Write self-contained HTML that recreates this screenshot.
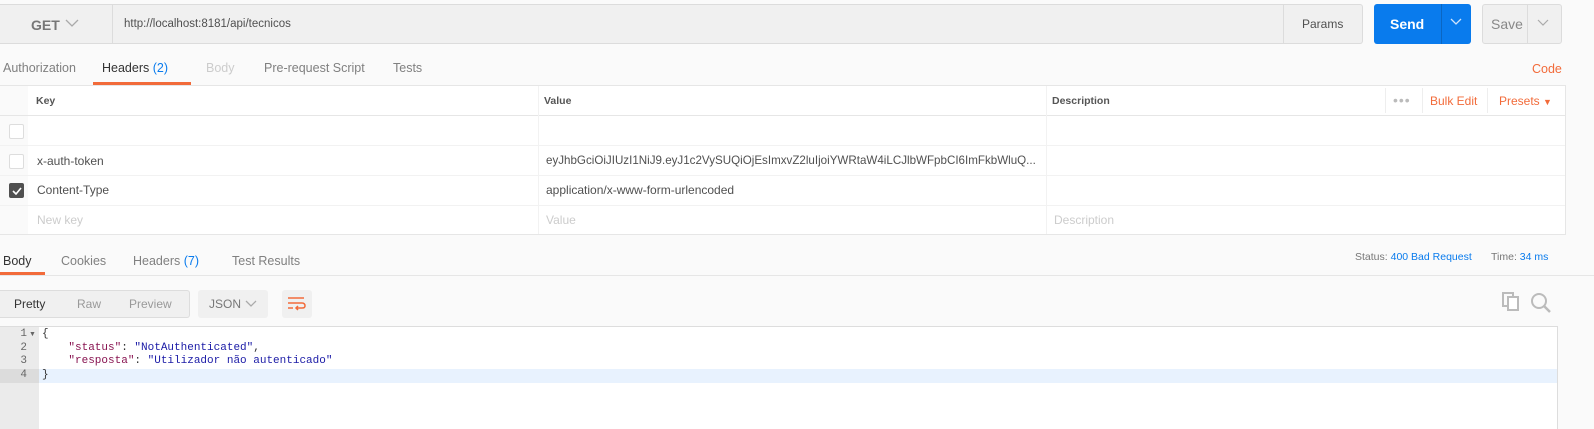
<!DOCTYPE html>
<html><head><meta charset="utf-8"><style>
*{box-sizing:border-box;margin:0;padding:0}
body{width:1594px;height:429px;overflow:hidden;background:#fafafa;font-family:"Liberation Sans",sans-serif;font-size:12px;color:#505050;position:relative}
.a{position:absolute}
.tab{position:absolute;top:61px;font-size:12.5px;color:#808080}
.cell{position:absolute;font-size:12px;color:#505050;white-space:nowrap}
.hl{position:absolute;left:0;height:1px;background:#e6e6e6}
.cb{position:absolute;left:9px;width:15px;height:15px;border:1px solid #ddd;border-radius:2px;background:#fff}
.mono{font-family:"Liberation Mono",monospace;font-size:11px}
</style></head><body>
<div class="a" style="left:0;top:4px;width:1363px;height:40px;background:#f0f0f0;border:1px solid #dcdcdc;border-left:none;border-radius:0 3px 3px 0"></div>
<div class="a" style="left:112px;top:5px;width:1px;height:38px;background:#dcdcdc"></div>
<div class="a" style="left:1283px;top:5px;width:1px;height:38px;background:#dcdcdc"></div>
<div class="a" style="left:31px;top:17px;font-size:14px;color:#777;font-weight:bold">GET</div>
<svg class="a" style="left:65px;top:18px" width="14" height="10"><path d="M1 2 L7 8 L13 2" stroke="#aaa" stroke-width="1.3" fill="none"/></svg>
<div class="a" style="left:124px;top:18px;font-size:11.5px;color:#505050">http://localhost:8181/api/tecnicos</div>
<div class="a" style="left:1302px;top:17px;font-size:12px;color:#505050">Params</div>
<div class="a" style="left:1374px;top:4px;width:97px;height:40px;background:#097bed;border-radius:3px"></div>
<div class="a" style="left:1441px;top:4px;width:1px;height:40px;background:#0a66c2"></div>
<div class="a" style="left:1390px;top:16px;font-size:14px;color:#fff;font-weight:bold">Send</div>
<svg class="a" style="left:1450px;top:18px" width="12" height="8"><path d="M1 1 L6 6 L11 1" stroke="#cfe3fb" stroke-width="1.3" fill="none"/></svg>
<div class="a" style="left:1482px;top:4px;width:80px;height:40px;background:#f0f0f0;border:1px solid #dcdcdc;border-radius:3px"></div>
<div class="a" style="left:1527px;top:5px;width:1px;height:38px;background:#dcdcdc"></div>
<div class="a" style="left:1491px;top:16px;font-size:14px;color:#888">Save</div>
<svg class="a" style="left:1537px;top:19px" width="12" height="8"><path d="M1 1 L6 6 L11 1" stroke="#aaa" stroke-width="1.2" fill="none"/></svg>
<div class="tab" style="left:3px">Authorization</div>
<div class="tab" style="left:102px;color:#333">Headers <span style="color:#097bed">(2)</span></div>
<div class="tab" style="left:206px;color:#ccc">Body</div>
<div class="tab" style="left:264px">Pre-request Script</div>
<div class="tab" style="left:393px">Tests</div>
<div class="a" style="left:93px;top:82px;width:98px;height:3px;background:#f26b3a"></div>
<div class="a" style="left:1532px;top:62px;font-size:12.5px;color:#f26b3a">Code</div>
<div class="a" style="left:0;top:85px;width:1566px;height:150px;background:#fff"></div>
<div class="a" style="left:0;top:85px;width:28px;height:150px;background:#fafafa"></div>
<div class="hl" style="top:85px;width:1566px"></div>
<div class="hl" style="top:115px;width:1566px"></div>
<div class="hl" style="top:145px;width:1566px;background:#f2f2f2"></div>
<div class="hl" style="top:175px;width:1566px;background:#f2f2f2"></div>
<div class="hl" style="top:205px;width:1566px;background:#f2f2f2"></div>
<div class="hl" style="top:234px;width:1566px"></div>
<div class="a" style="left:1565px;top:85px;width:1px;height:150px;background:#e6e6e6"></div>
<div class="a" style="left:538px;top:86px;width:1px;height:148px;background:#f2f2f2"></div>
<div class="a" style="left:1046px;top:86px;width:1px;height:148px;background:#f2f2f2"></div>
<div class="a" style="left:1385px;top:88px;width:1px;height:25px;background:#eee"></div>
<div class="a" style="left:1422px;top:88px;width:1px;height:25px;background:#eee"></div>
<div class="a" style="left:1487px;top:88px;width:1px;height:25px;background:#eee"></div>
<div class="cell" style="left:36px;top:95px;font-size:10.5px;font-weight:bold;color:#555">Key</div>
<div class="cell" style="left:544px;top:95px;font-size:10.5px;font-weight:bold;color:#555">Value</div>
<div class="cell" style="left:1052px;top:95px;font-size:10.5px;font-weight:bold;color:#555">Description</div>
<div class="cell" style="left:1393px;top:92px;color:#bbb;font-size:14px;letter-spacing:1px">•••</div>
<div class="cell" style="left:1430px;top:94px;color:#f26b3a">Bulk Edit</div>
<div class="cell" style="left:1499px;top:94px;color:#f26b3a">Presets <span style="font-size:9px">▼</span></div>
<div class="cb" style="top:124px"></div>
<div class="cb" style="top:154px"></div>
<div class="cb" style="top:183px;background:#505050;border-color:#505050"></div>
<svg class="a" style="left:12px;top:187px" width="10" height="8"><path d="M1 4 L4 7 L9 1" stroke="#fff" stroke-width="1.6" fill="none"/></svg>
<div class="cell" style="left:37px;top:154px">x-auth-token</div>
<div class="cell" style="left:546px;top:154px;font-size:11.6px;width:490px;overflow:hidden">eyJhbGciOiJIUzI1NiJ9.eyJ1c2VySUQiOjEsImxvZ2luIjoiYWRtaW4iLCJlbWFpbCI6ImFkbWluQ...</div>
<div class="cell" style="left:37px;top:183px">Content-Type</div>
<div class="cell" style="left:546px;top:183px">application/x-www-form-urlencoded</div>
<div class="cell" style="left:37px;top:213px;color:#ccc">New key</div>
<div class="cell" style="left:546px;top:213px;color:#ccc">Value</div>
<div class="cell" style="left:1054px;top:213px;color:#ccc">Description</div>
<div class="tab" style="left:3px;top:254px;color:#333">Body</div>
<div class="tab" style="left:61px;top:254px">Cookies</div>
<div class="tab" style="left:133px;top:254px">Headers <span style="color:#097bed">(7)</span></div>
<div class="tab" style="left:232px;top:254px">Test Results</div>
<div class="a" style="left:0;top:272px;width:45px;height:3px;background:#f26b3a"></div>
<div class="hl" style="top:275px;width:1594px"></div>
<div class="a" style="left:1355px;top:251px;font-size:10.5px;color:#777">Status: <span style="color:#097bed">400 Bad Request</span></div>
<div class="a" style="left:1491px;top:251px;font-size:10.5px;color:#777">Time: <span style="color:#097bed">34 ms</span></div>
<div class="a" style="left:0;top:290px;width:190px;height:28px;background:#f0f0f0;border:1px solid #ddd;border-left:none;border-radius:0 3px 3px 0"></div>
<div class="a" style="left:14px;top:297px;color:#333;font-size:12px">Pretty</div>
<div class="a" style="left:77px;top:297px;color:#999;font-size:12px">Raw</div>
<div class="a" style="left:129px;top:297px;color:#999;font-size:12px">Preview</div>
<div class="a" style="left:198px;top:290px;width:70px;height:28px;background:#f0f0f0;border-radius:3px"></div>
<div class="a" style="left:209px;top:297px;color:#777;font-size:12px">JSON</div>
<svg class="a" style="left:245px;top:300px" width="12" height="8"><path d="M1 1 L6 6 L11 1" stroke="#aaa" stroke-width="1.3" fill="none"/></svg>
<div class="a" style="left:282px;top:290px;width:30px;height:28px;background:#f0f0f0;border-radius:3px"></div>
<svg class="a" style="left:287px;top:296px" width="20" height="16"><path d="M1 2 H17 M1 7 H15 Q18 7 18 10 Q18 12 15 12 H9 M11 10 L9 12 L11 14 M1 12 H6" stroke="#f26b3a" stroke-width="1.5" fill="none"/></svg>
<svg class="a" style="left:1502px;top:292px" width="20" height="20"><rect x="1" y="1" width="10" height="13" fill="none" stroke="#bbb" stroke-width="2"/><rect x="6" y="5" width="10" height="13" fill="#fff" stroke="#bbb" stroke-width="2"/></svg>
<svg class="a" style="left:1530px;top:292px" width="22" height="22"><circle cx="9" cy="9" r="7" fill="none" stroke="#bbb" stroke-width="2"/><path d="M14 14 L20 20" stroke="#bbb" stroke-width="2.5"/></svg>
<div class="a" style="left:0;top:326px;width:1558px;height:103px;background:#fff;border-top:1px solid #ddd;border-right:1px solid #ddd"></div>
<div class="a" style="left:0;top:327px;width:39px;height:102px;background:#ebebeb"></div>
<div class="a" style="left:39px;top:369px;width:1518px;height:14px;background:#e8f2fe"></div>
<div class="a" style="left:0;top:369px;width:39px;height:14px;background:#dcdcdc"></div>
<div class="a mono" style="left:0;top:328px;width:27px;text-align:right;color:#666;line-height:13.6px">1<br>2<br>3<br>4</div>
<div class="a" style="left:29px;top:331px;font-size:7px;color:#666">▼</div>
<div class="a mono" style="left:42px;top:328px;line-height:13.6px;color:#333;white-space:pre">{
    <span style="color:#881350">"status"</span>: <span style="color:#1a1aa6">"NotAuthenticated"</span>,
    <span style="color:#881350">"resposta"</span>: <span style="color:#1a1aa6">"Utilizador não autenticado"</span>
}</div>
</body></html>
